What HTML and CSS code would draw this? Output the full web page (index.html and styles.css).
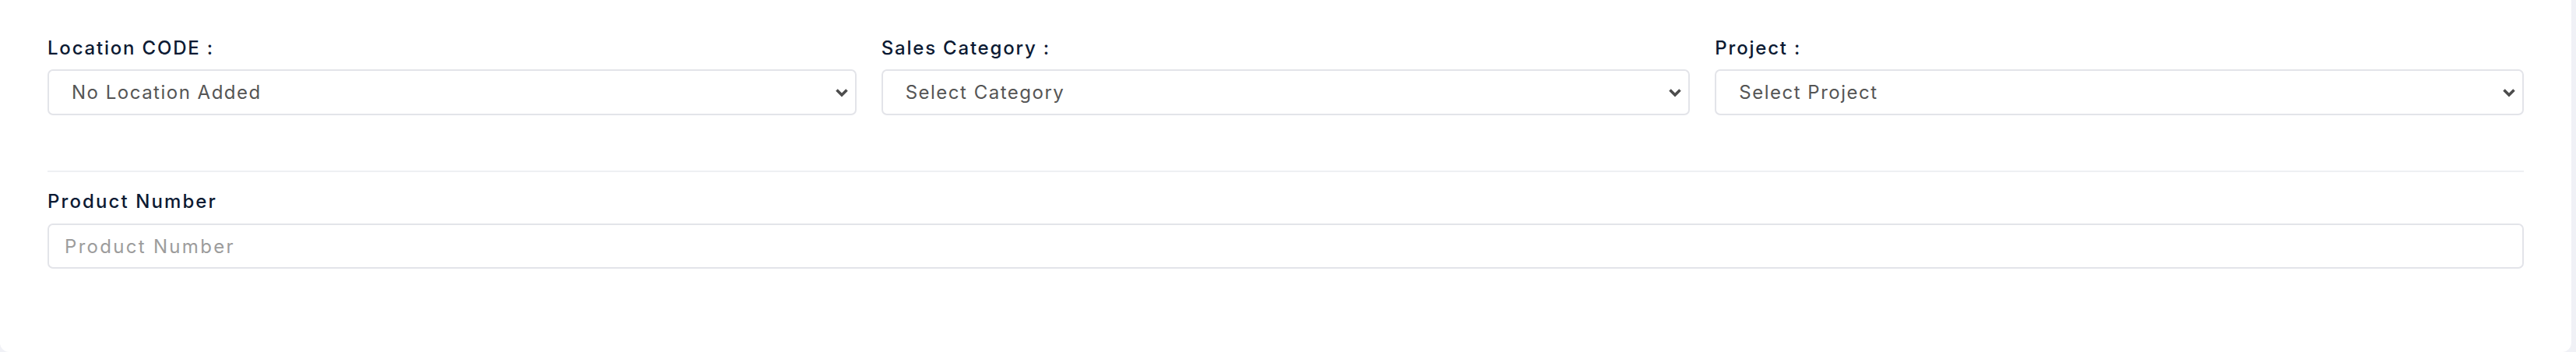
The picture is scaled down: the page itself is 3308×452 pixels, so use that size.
FILE: index.html
```html
<!DOCTYPE html>
<html lang="en">
<head>
<meta charset="utf-8">
<title>Filters</title>
<link rel="stylesheet" href="styles.css">
</head>
<body>
<div class="card">
  <div class="row">
    <div class="field">
      <label class="label">Location CODE :</label>
      <div class="select">
        <span class="select-text">No Location Added</span>
        <svg class="chev" width="18" height="12" viewBox="0 0 18 12"><polyline points="2.5,2.5 9,9 15.5,2.5" fill="none" stroke="#4d4d4d" stroke-width="3.6"/></svg>
      </div>
    </div>
    <div class="field">
      <label class="label">Sales Category :</label>
      <div class="select">
        <span class="select-text">Select Category</span>
        <svg class="chev" width="18" height="12" viewBox="0 0 18 12"><polyline points="2.5,2.5 9,9 15.5,2.5" fill="none" stroke="#4d4d4d" stroke-width="3.6"/></svg>
      </div>
    </div>
    <div class="field">
      <label class="label">Project :</label>
      <div class="select">
        <span class="select-text">Select Project</span>
        <svg class="chev" width="18" height="12" viewBox="0 0 18 12"><polyline points="2.5,2.5 9,9 15.5,2.5" fill="none" stroke="#4d4d4d" stroke-width="3.6"/></svg>
      </div>
    </div>
  </div>
  <hr class="divider">
  <div class="field">
    <label class="label label-product">Product Number</label>
    <input class="input" type="text" placeholder="Product Number">
  </div>
</div>
</body>
</html>
```
FILE: styles.css
```css
html, body {
  margin: 0;
  padding: 0;
}
body {
  background: #f0f1f6;
  font-family: "Inter", "Open Sans", sans-serif;
  height: 452px;
  overflow: hidden;
}
.card {
  box-sizing: border-box;
  width: 3302px;
  height: 452px;
  background: #ffffff;
  border-radius: 0 0 12px 12px;
  padding: 47px 61px 0 61px;
}
.row {
  display: grid;
  grid-template-columns: 1fr 1fr 1fr;
  column-gap: 32px;
}
.field {
  display: flex;
  flex-direction: column;
}
.label {
  font-size: 24px;
  line-height: 30px;
  font-weight: 500;
  letter-spacing: 1.8px;
  color: #0c1a33;
  margin-bottom: 12px;
}
.select {
  box-sizing: border-box;
  height: 59px;
  border: 2px solid #e3e4e9;
  border-radius: 7px;
  display: flex;
  align-items: center;
  justify-content: space-between;
  padding: 0 8px 0 29px;
}
.select-text {
  font-size: 24px;
  color: #555555;
  line-height: 30px;
  letter-spacing: 1.5px;
}
.chev {
  display: block;
}
.divider {
  border: 0;
  height: 2px;
  background: #eef0f3;
  margin: 71px 0 23px 0;
}
.label-product {
  margin-bottom: 13px;
  letter-spacing: 2.1px;
}
.input {
  box-sizing: border-box;
  height: 58px;
  border: 2px solid #e3e4e9;
  border-radius: 7px;
  padding: 0 20px;
  font: 400 24px "Inter", "Open Sans", sans-serif;
  letter-spacing: 2.3px;
  color: #555555;
  outline: none;
  background: #fff;
}
.input::placeholder {
  font: 400 24px "Inter", "Open Sans", sans-serif;
  letter-spacing: 2.3px;
  color: #9c9c9c;
}
```
